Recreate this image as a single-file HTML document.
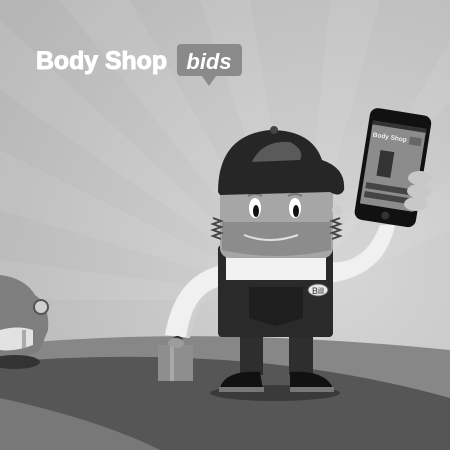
<!DOCTYPE html>
<html><head><style>
html,body{margin:0;padding:0;width:450px;height:450px;overflow:hidden;background:#c4c4c4}
svg{display:block}
</style></head><body>
<svg width="450" height="450" viewBox="0 0 450 450" xmlns="http://www.w3.org/2000/svg">
<defs>
<radialGradient id="bg" cx="0.75" cy="0.6" r="0.9">
<stop offset="0" stop-color="#d6d6d6"/><stop offset="1" stop-color="#b6b6b6"/>
</radialGradient>
</defs>
<rect width="450" height="450" fill="url(#bg)"/>
<g fill="#ffffff" opacity="0.07">
<polygon points="300,300 0,20 0,90"/>
<polygon points="300,300 0,150 0,210"/>
<polygon points="300,300 60,0 130,0"/>
<polygon points="300,300 200,0 250,0"/>
<polygon points="300,300 330,0 380,0"/>
<polygon points="300,300 450,40 450,100"/>
<polygon points="300,300 450,180 450,230"/>
<polygon points="300,300 0,260 0,300"/>
</g>
<!-- ground -->
<path d="M0,345 Q200,325 450,350 L450,450 L0,450Z" fill="#878787"/>
<path d="M0,362 Q250,342 450,398 L450,450 L0,450Z" fill="#565656"/>
<path d="M0,398 Q100,420 160,450 L0,450Z" fill="#787878"/>
<!-- car -->
<path d="M0,275 Q25,278 35,295 Q50,305 48,330 L40,350 Q20,362 0,358Z" fill="#7e7e7e"/>
<path d="M0,330 Q18,325 33,330 L33,345 Q15,352 0,350Z" fill="#e2e2e2"/>
<rect x="22" y="330" width="4" height="18" fill="#aaa"/>
<circle cx="41" cy="307" r="7" fill="#d0d0d0" stroke="#555" stroke-width="2"/>
<ellipse cx="15" cy="362" rx="25" ry="7" fill="#333"/>
<!-- shadow -->
<ellipse cx="275" cy="393" rx="65" ry="8" fill="#3a3a3a"/>
<!-- left arm -->
<path d="M222,265 Q175,275 165,335 L190,338 Q195,295 222,290Z" fill="#f0f0f0"/>
<path d="M190,338 Q195,300 222,292 L222,286 Q192,292 186,338Z" fill="#cfcfcf"/>
<!-- toolbox -->
<rect x="158" y="345" width="35" height="36" fill="#8e8e8e"/>
<rect x="170" y="345" width="4" height="36" fill="#a8a8a8"/>
<path d="M172,345 Q175,333 182,340" stroke="#333" stroke-width="3" fill="none"/>
<ellipse cx="176" cy="343" rx="8" ry="5" fill="#9c9c9c"/>
<!-- right arm -->
<path d="M330,262 Q365,265 380,225 L395,225 Q385,275 330,283Z" fill="#f0f0f0"/>
<!-- legs -->
<rect x="240" y="335" width="23" height="40" fill="#2e2e2e"/>
<rect x="289" y="335" width="24" height="40" fill="#2e2e2e"/>
<path d="M220,388 Q225,370 260,372 L263,390Z" fill="#111"/>
<path d="M290,390 L290,372 Q325,370 333,388Z" fill="#111"/>
<rect x="219" y="387" width="45" height="5" fill="#777"/>
<rect x="290" y="387" width="44" height="5" fill="#777"/>
<!-- overalls -->
<rect x="218" y="245" width="115" height="92" rx="4" fill="#2a2a2a"/>
<rect x="226" y="252" width="100" height="28" fill="#f2f2f2"/>
<path d="M249,287 L303,287 L303,318 L276,326 L249,318Z" fill="#1e1e1e"/>
<ellipse cx="318" cy="290" rx="10" ry="6" fill="#e8e8e8" stroke="#555"/>
<text x="318" y="294" font-family="Liberation Sans,sans-serif" font-size="9" text-anchor="middle" fill="#333">Bill</text>
<!-- head -->
<rect x="220" y="178" width="113" height="80" rx="10" fill="#a6a6a6"/>
<path d="M222,222 L331,222 L331,250 Q276,262 222,250Z" fill="#8c8c8c"/>
<path d="M244,235 Q270,245 298,235" stroke="#e0e0e0" stroke-width="2" fill="none"/>
<circle cx="215" cy="210" r="5" fill="#ccc"/><circle cx="337" cy="210" r="5" fill="#ccc"/>
<path d="M213,218 l8,3 l-8,3 l8,3 l-8,3 l8,3 l-8,3 l8,3" stroke="#444" stroke-width="2" fill="none"/>
<path d="M340,218 l-8,3 l8,3 l-8,3 l8,3 l-8,3 l8,3 l-8,3" stroke="#444" stroke-width="2" fill="none"/>
<ellipse cx="255" cy="208" rx="6" ry="10" fill="#fff"/>
<ellipse cx="295" cy="208" rx="6" ry="10" fill="#fff"/>
<ellipse cx="256" cy="211" rx="3" ry="6" fill="#111"/>
<ellipse cx="296" cy="211" rx="3" ry="6" fill="#111"/>
<path d="M248,196 Q255,192 262,196 M288,196 Q295,192 302,196" stroke="#777" stroke-width="2" fill="none"/>
<!-- cap -->
<path d="M218,192 Q218,135 270,130 Q312,130 322,160 Q346,168 344,190 Q340,198 330,192 L220,195Z" fill="#262626"/>
<path d="M252,162 Q262,140 290,142 Q305,150 300,160Z" fill="#5a5a5a"/>
<circle cx="274" cy="130" r="4" fill="#444"/>
<!-- phone -->
<g transform="rotate(9 392 167)">
<rect x="362" y="111" width="62" height="113" rx="8" fill="#111"/>
<rect x="366" y="124" width="54" height="84" fill="#8c8c8c"/>
<rect x="366" y="124" width="54" height="4" fill="#333"/>
<text x="368" y="140" font-family="Liberation Sans,sans-serif" font-weight="bold" font-size="6.5" fill="#eee">Body Shop</text>
<rect x="405" y="134" width="12" height="8" fill="#666"/>
<rect x="378" y="152" width="14" height="26" fill="#333"/>
<rect x="369" y="186" width="48" height="6" fill="#444"/>
<rect x="369" y="195" width="48" height="6" fill="#444"/>
<circle cx="393" cy="216" r="4" fill="#333"/>
</g>
<!-- fingers -->
<ellipse cx="420" cy="178" rx="12" ry="7" fill="#c8c8c8"/>
<ellipse cx="419" cy="191" rx="12" ry="7" fill="#c8c8c8"/>
<ellipse cx="416" cy="204" rx="12" ry="7" fill="#c8c8c8"/>
<!-- logo -->
<text x="36" y="69" font-family="Liberation Sans,sans-serif" font-weight="bold" font-size="25" fill="#fff" stroke="#fff" stroke-width="1" textLength="131" lengthAdjust="spacingAndGlyphs">Body Shop</text>
<rect x="177" y="44" width="65" height="32" rx="4" fill="#8a8a8a"/>
<polygon points="202,76 216,76 209,86" fill="#8a8a8a"/>
<text x="209" y="69" text-anchor="middle" font-family="Liberation Sans,sans-serif" font-weight="bold" font-style="italic" font-size="22" fill="#fff">bids</text>
</svg>
</body></html>
